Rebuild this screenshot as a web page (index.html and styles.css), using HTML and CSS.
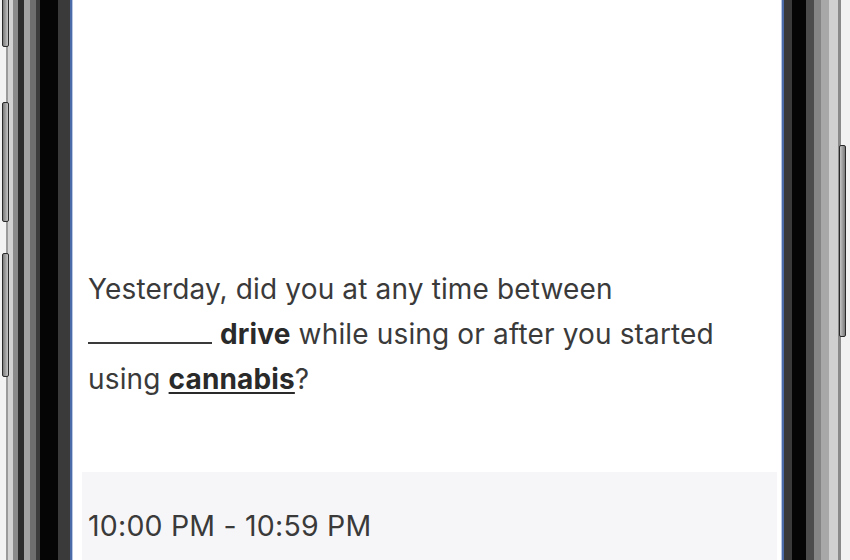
FILE: index.html
```html
<!DOCTYPE html>
<html>
<head>
<meta charset="utf-8">
<link rel="stylesheet" href="styles.css">
</head>
<body>
<div class="phone">
  <div class="bezel bezel-left">
    <span class="btn btn-l1"></span>
    <span class="btn btn-l2"></span>
    <span class="btn btn-l3"></span>
  </div>
  <div class="screen">
    <p class="question">Yesterday, did you at any time between<br><span class="blank"></span> <b>drive</b> while using or after you started<br>using <b class="u">cannabis</b>?</p>
    <div class="option">
      <div class="option-label">10:00 PM - 10:59 PM</div>
    </div>
  </div>
  <div class="bezel bezel-right">
    <span class="btn btn-r1"></span>
  </div>
</div>
</body>
</html>
```
FILE: styles.css
```css
html, body {
  margin: 0;
  padding: 0;
  background: #ffffff;
}
body {
  width: 850px;
  height: 560px;
  overflow: hidden;
  font-family: "Inter", "Liberation Sans", Arial, sans-serif;
}
.phone {
  display: flex;
  width: 850px;
  height: 560px;
}
.bezel {
  position: relative;
  flex: none;
  height: 100%;
}
.bezel-left {
  width: 73px;
  background: linear-gradient(to right,
    #f2f2f2 0px, #f2f2f2 6px,
    #9a9a9a 6px, #9a9a9a 8px,
    #d2d2d2 8px, #d2d2d2 13px,
    #8a8a8a 13px, #8a8a8a 18px,
    #2e2e2e 18px, #2e2e2e 24px,
    #a4a4a4 24px, #a4a4a4 30px,
    #6e6e6e 30px, #6e6e6e 36px,
    #3c3c3c 36px, #3c3c3c 40px,
    #050505 40px, #050505 58px,
    #3a3a3a 58px, #3a3a3a 70px,
    #4a6aa8 70px, #4a6aa8 72px,
    #b8c8e4 72px, #b8c8e4 73px);
}
.bezel-right {
  width: 69px;
  background: linear-gradient(to right,
    #b8c8e4 0px, #b8c8e4 1px,
    #4a6aa8 1px, #4a6aa8 3px,
    #3a3a3a 3px, #3a3a3a 11px,
    #050505 11px, #050505 25px,
    #4c4c4c 25px, #4c4c4c 33px,
    #858585 33px, #858585 40px,
    #a8a8a8 40px, #a8a8a8 48px,
    #d0d0d0 48px, #d0d0d0 57px,
    #8a8a8a 57px, #8a8a8a 60px,
    #f2f2f2 60px, #f2f2f2 69px);
}
.btn {
  position: absolute;
  width: 5px;
  border: 1px solid #2a2a2a;
  background: linear-gradient(to right, #7a7a7a, #c4c4c4);
  border-radius: 2px;
}
.btn-l1 { left: 2px; top: -10px; height: 55px; }
.btn-l2 { left: 2px; top: 102px; height: 118px; }
.btn-l3 { left: 2px; top: 253px; height: 122px; }
.btn-r1 { left: 58px; top: 145px; height: 190px; background: linear-gradient(to right, #c4c4c4, #7a7a7a); }

.screen {
  flex: 1;
  display: flex;
  flex-direction: column;
  background: #ffffff;
}
.question {
  margin: 267px 0 0 0;
  padding: 0 0 0 15px;
  font-size: 28px;
  line-height: 45px;
  letter-spacing: 0.15px;
  color: #3a3a3a;
  white-space: nowrap;
}
.question b {
  color: #2a2a2a;
  font-weight: 700;
}
.question .u {
  text-decoration: underline;
  text-decoration-thickness: 2px;
  text-underline-offset: 3px;
}
.blank {
  display: inline-block;
  width: 124px;
  border-bottom: 2px solid #3a3a3a;
  vertical-align: baseline;
}
.option {
  margin: 70px 4px 0 9px;
  flex: 1;
  background: #f6f6f8;
  padding: 36px 0 0 6px;
}
.option-label {
  font-size: 28.5px;
  letter-spacing: 0.2px;
  color: #3a3a3a;
}
```
